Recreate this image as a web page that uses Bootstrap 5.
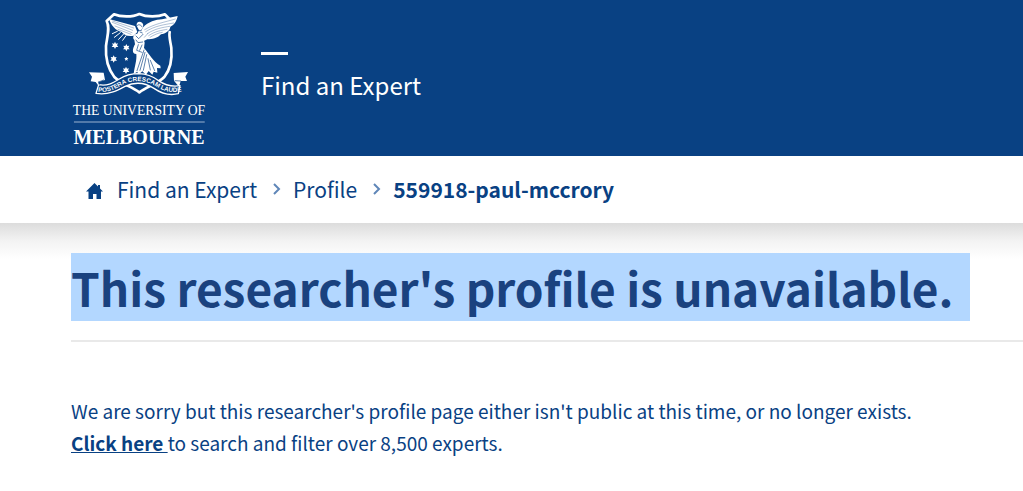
<!DOCTYPE html>
<html lang="en">
<head>
<meta charset="utf-8">
<meta name="viewport" content="width=device-width, initial-scale=1">
<title>Find an Expert - The University of Melbourne</title>
<link href="https://cdn.jsdelivr.net/npm/bootstrap@5.3.0/dist/css/bootstrap.min.css" rel="stylesheet">
<style>
  :root { --uom-blue: #094183; }
  body { font-family: "Noto Sans CJK SC", "Open Sans", sans-serif; color: var(--uom-blue); background: #fff; }
  a { color: inherit; }
  .page-inset { padding-left: 71px; }
  .site-header { background: var(--uom-blue); color: #fff; min-height: 156px; padding-top: 11px; }
  .crest { width: 136px; height: 136px; display: block; }
  .site-name { margin-left: 54px; padding-top: 41px; font-size: 24px; line-height: 36px; }
  .site-name::before { content: ""; display: block; width: 27px; height: 3px; background: #fff; margin-bottom: 12px; }
  .trail { min-height: 67px; padding-bottom: 2px; font-size: 21px; line-height: 32px; }
  .trail-list { padding-left: 14px; }
  .trail-home { margin-right: 14px; padding-top: 4px; }
  .trail-arrow { margin-left: 16px; margin-right: 12px; }
  .page-body { background: linear-gradient(#dcdcdc, #f3f3f3 18px, #fff 36px) no-repeat; padding-top: 30px; }
  .page-title { border-bottom: 2px solid #e9e9e9; padding-bottom: 19px; margin-bottom: 53px; font-size: 46px; line-height: 68px; font-weight: 700; color: #1a427f; }
  .page-title span { background: #b3d7ff; padding-right: 17px; }
  .notice { font-size: 19px; line-height: 32px; }
</style>
</head>
<body>
<header class="site-header page-inset d-flex align-items-start">
  <a href="#" aria-label="The University of Melbourne">
    <svg class="crest" viewBox="33 33 408 408" fill="none" stroke="#fff" stroke-linecap="round" stroke-linejoin="round">
      <!-- shield -->
      <path stroke-width="8" d="M162 43C181 51 217 52 238 42C260 52 294 51 315 43L331 60M162 43L140 63C151 84 141 110 138 138C136 172 143 205 163 231C184 252 216 260 238 277C260 260 292 252 313 231C331 208 337 178 334 144C332 127 326 112 329 96"/>
      <!-- left wing -->
      <path fill="#fff" stroke="none" d="M147 57L225 78L232 96L221 107C203 111 191 104 185 96C167 92 153 76 147 57Z"/>
      <path stroke="#094183" stroke-width="1" d="M157 67L218 91M165 78L216 98M174 88L213 103M158 63L221 84"/>
      <path stroke-width="3" d="M172 94L157 101M181 98L163 112M190 103L176 118M198 107L188 121"/>
      <!-- right wing -->
      <path fill="#fff" stroke="none" d="M248 83C265 65 287 59 306 58L353 48C350 65 341 76 331 80C330 93 316 100 303 103C293 115 276 118 262 118L247 125L238 106Z"/>
      <path stroke="#094183" stroke-width="1" d="M254 89C284 71 313 67 346 57M257 95C285 77 313 74 341 69M262 101C284 86 309 82 329 79M266 107C285 93 306 91 321 88M270 112C283 104 294 99 307 97M253 112L263 101"/>
      <!-- figure -->
      <path fill="#fff" stroke="none" d="M230 77C228 66 239 61 247 69C252 75 250 83 244 89L254 99L249 112L254 128L252 144C268 162 279 184 301 197L302 205L291 204L292 218L281 215L277 224L266 213L258 224L247 214L235 224L232 215L221 222C224 197 231 181 229 162C214 162 218 145 225 133L223 120C214 111 225 100 232 101L237 91Z"/>
      <path stroke="#094183" stroke-width="2" d="M231 77C235 71 243 75 246 80M228 108L236 116L249 103M228 120L234 128L248 126M235 134L230 151L246 157M246 135L239 151M252 150L231 212M255 157L240 211M260 164L250 211M264 176L271 210M271 181L284 212M235 91L244 92M240 96L247 99"/>
      <!-- stars -->
      <g fill="#fff" stroke="none">
        <path id="star" d="M165 125L168 131L174 130L171 136L175 141L168 141L165 147L162 141L155 141L159 136L156 130L162 131Z"/>
        <use href="#star" x="34" y="7"/>
        <use href="#star" x="-4" y="41"/>
        <use href="#star" x="33" y="75"/>
        <path d="M199 170L201 174L205 174L202 178L203 182L199 180L195 182L196 178L193 174L197 174Z"/>
      </g>
      <!-- ribbon -->
      <path fill="#fff" stroke="none" d="M87 217L131 218L135 240L116 246L116 258L107 246L92 244L96 230ZM341 219L384 216L376 230L381 243L362 243L357 260L342 242Z"/>
      <path fill="#094183" stroke="#fff" stroke-width="4" d="M116 254C141 259 157 250 178 237C197 225 216 221 237 221C260 222 278 229 294 241C313 254 332 262 360 257L355 281C326 288 302 279 282 265C254 247 222 246 195 259C171 272 145 286 108 280Z"/>
      <path stroke="#094183" stroke-width="2" d="M116 246L131 240M116 246L118 253M362 243L345 242"/>
      <path id="motto" stroke="none" d="M114 275C145 279 165 268 189 254C220 239 254 239 286 258C308 272 328 279 360 275"/>
      <text fill="#fff" stroke="none" font-family="Liberation Sans, sans-serif" font-weight="700" font-size="19"><textPath href="#motto">POSTERA CRESCAM LAUDE</textPath></text>
      <path stroke="#9db4d0" stroke-width="3" d="M43 366H433"/>
      <g fill="#fff" stroke="none" font-family="Liberation Serif, serif" text-anchor="middle">
        <text x="237" y="344" font-size="41">THE UNIVERSITY OF</text>
        <text x="237" y="431" font-size="60" font-weight="700">MELBOURNE</text>
      </g>
    </svg>
  </a>
  <div class="site-name">Find an Expert</div>
</header>

<nav class="trail page-inset d-flex align-items-center" aria-label="breadcrumb">
  <ol class="trail-list list-unstyled d-flex align-items-center mb-0">
    <li class="d-flex align-items-center">
      <a href="#" class="trail-home d-flex" aria-label="Home"><svg width="18" height="18" viewBox="0 0 18 18" fill="#094183"><path d="M9.500 1L1 9.500H3.500V17H8V12H11.500V17H16V9.500H18L15 6.500V3H13V4.500Z"/></svg></a>
      <a href="#" class="text-decoration-none">Find an Expert</a>
    </li>
    <li class="d-flex align-items-center">
      <svg class="trail-arrow" width="8" height="12" viewBox="0 0 8 12" fill="none" stroke="#5f86b8" stroke-width="2" aria-hidden="true"><path d="M1 1L6 6L1 11"/></svg>
      <a href="#" class="text-decoration-none">Profile</a>
    </li>
    <li class="d-flex align-items-center fw-bold" aria-current="page">
      <svg class="trail-arrow" width="8" height="12" viewBox="0 0 8 12" fill="none" stroke="#5f86b8" stroke-width="2" aria-hidden="true"><path d="M1 1L6 6L1 11"/></svg>
      559918-paul-mccrory
    </li>
  </ol>
</nav>

<main class="page-body page-inset">
  <h1 class="page-title d-flex"><span>This researcher's profile is unavailable.</span></h1>
  <p class="notice mb-0">We are sorry but this researcher's profile page either isn't public at this time, or no longer exists.<br>
  <a href="#" class="fw-bold">Click here </a>to search and filter over 8,500 experts.</p>
</main>
<script src="https://cdn.jsdelivr.net/npm/bootstrap@5.3.0/dist/js/bootstrap.bundle.min.js"></script>
</body>
</html>
